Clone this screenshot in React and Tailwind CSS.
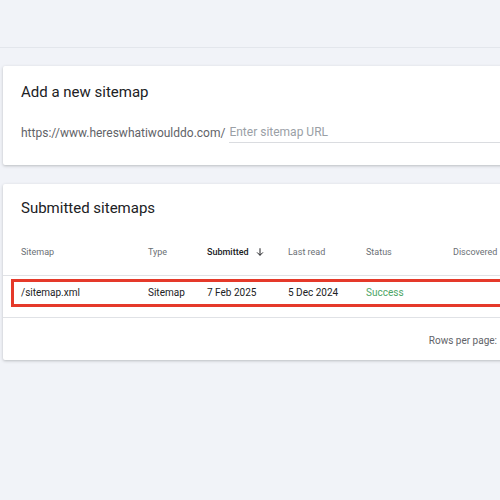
export default function App() {
  const cols = [
    { label: "Sitemap", w: "w-[127px]" },
    { label: "Type", w: "w-[59px]" },
    { label: "Submitted", w: "w-[81px]" },
    { label: "Last read", w: "w-[78px]" },
    { label: "Status", w: "w-[87px]" },
    { label: "Discovered", w: "w-[80px]" },
  ];
  return (
    <div
      className="w-[500px] h-[500px] overflow-hidden bg-[#f1f3f8]"
      style={{ fontFamily: "Roboto, 'Liberation Sans', sans-serif" }}
    >
      <div className="h-[48px] border-b border-[#e3e6ec]" />
      <div className="pl-[3px] pt-[18px] flex flex-col gap-[19px]">
        <div className="w-[520px] h-[99px] bg-white shadow-[0_1px_3px_rgba(60,64,67,0.3)] rounded-[2px] pl-[18px] pt-[16px]">
          <div className="text-[15px] leading-[20px] text-[#202124]">Add a new sitemap</div>
          <div className="flex items-end mt-[21px]">
            <div className="shrink-0 text-[12px] leading-[18px] text-[#5f6368] pb-[1px]">https://www.hereswhatiwoulddo.com/</div>
            <div className="ml-[4px] flex-1 border-b border-[#dadce0] text-[12px] leading-[18px] text-[#9aa0a6] pb-[1px]">
              Enter sitemap URL
            </div>
          </div>
        </div>

        <div className="relative w-[520px] h-[176px] bg-white shadow-[0_1px_3px_rgba(60,64,67,0.3)] rounded-[2px]">
          <div className="pl-[18px] pt-[14px] text-[15px] leading-[20px] text-[#202124]">Submitted sitemaps</div>
          <div className="flex items-center h-[45px] mt-[13px] pl-[18px] border-b border-[#e0e2e6]">
            {cols.map((c) => (
              <div
                key={c.label}
                className={`${c.w} shrink-0 text-[9px] flex items-center gap-[6px] ${c.label === "Submitted" ? "text-[#202124] font-medium" : "text-[#6b7075]"}`}
              >
                {c.label}
                {c.label === "Submitted" && (
                  <svg width="10" height="10" viewBox="0 0 24 24" className="mb-[2px]">
                    <path d="M12 3v17M5 13l7 7 7-7" fill="none" stroke="#202124" strokeWidth="2.4" />
                  </svg>
                )}
              </div>
            ))}
          </div>
          <div className="flex items-center h-[42px] pb-[8px] pl-[18px] border-b border-[#e0e2e6] text-[10px] text-[#202124]">
            <div className="w-[127px] shrink-0">/sitemap.xml</div>
            <div className="w-[59px] shrink-0">Sitemap</div>
            <div className="w-[81px] shrink-0">7 Feb 2025</div>
            <div className="w-[78px] shrink-0">5 Dec 2024</div>
            <div className="w-[87px] shrink-0 text-[#4ca565]">Success</div>
          </div>
          <div className="absolute left-[8px] top-[95px] w-[520px] h-[28px] border-[3px] border-[#e5392a]" />
          <div className="w-[500px] pr-[6px] h-[44px] flex items-center justify-end text-[10px] text-[#5f6368]">
            Rows per page:
          </div>
        </div>
      </div>
    </div>
  );
}
